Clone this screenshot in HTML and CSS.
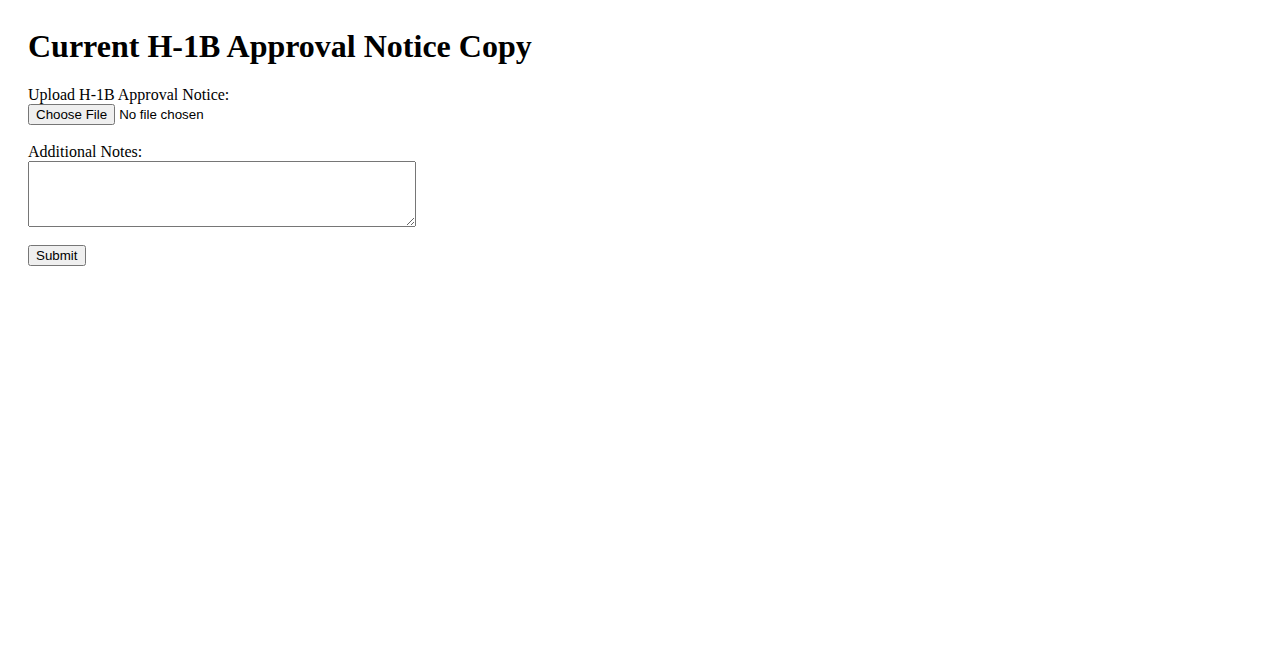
FILE: index.html
```html
<!DOCTYPE html>
<html lang="en">

<head>
    <meta charset="UTF-8">
    <meta name="viewport" content="width=device-width, initial-scale=1.0">
    <title>Current H-1B Approval Notice Copy</title>
    <link rel="stylesheet" href="styles.css">
</head>

<body>

    <div class="container">
        <h1 class="title">Current H-1B Approval Notice Copy</h1>

        <form class="notice-form" onsubmit="return false">
            <div class="field">
                <label class="field-label" for="noticeFile">Upload H-1B Approval Notice:</label>
                <input type="file" id="noticeFile" class="file-input">
            </div>

            <div class="field">
                <label class="field-label" for="notes">Additional Notes:</label>
                <textarea id="notes" class="notes-input"></textarea>
            </div>

            <button type="submit" class="submit-button">Submit</button>
        </form>
    </div>

</body>

</html>
```

FILE: styles.css
```css
body {
    margin: 8px;
    font-family: 'Liberation Serif', 'Times New Roman', serif;
    font-size: 16px;
    color: #000;
    background: #fff;
}

.container {
    padding: 20px;
}

.title {
    margin: 0 0 21px;
    font-size: 32px;
    font-weight: bold;
}

.field {
    margin-bottom: 18px;
}

.field-label {
    display: block;
}

.file-input,
.submit-button {
    font-family: 'Liberation Sans', Arial, sans-serif;
    font-size: 13.33px;
}

.notes-input {
    display: block;
    box-sizing: border-box;
    width: 388px;
    height: 66px;
    font-family: 'Liberation Mono', monospace;
    font-size: 13.33px;
}

.submit-button {
    display: block;
    padding: 1px 7px 1px 6px;
}
```
